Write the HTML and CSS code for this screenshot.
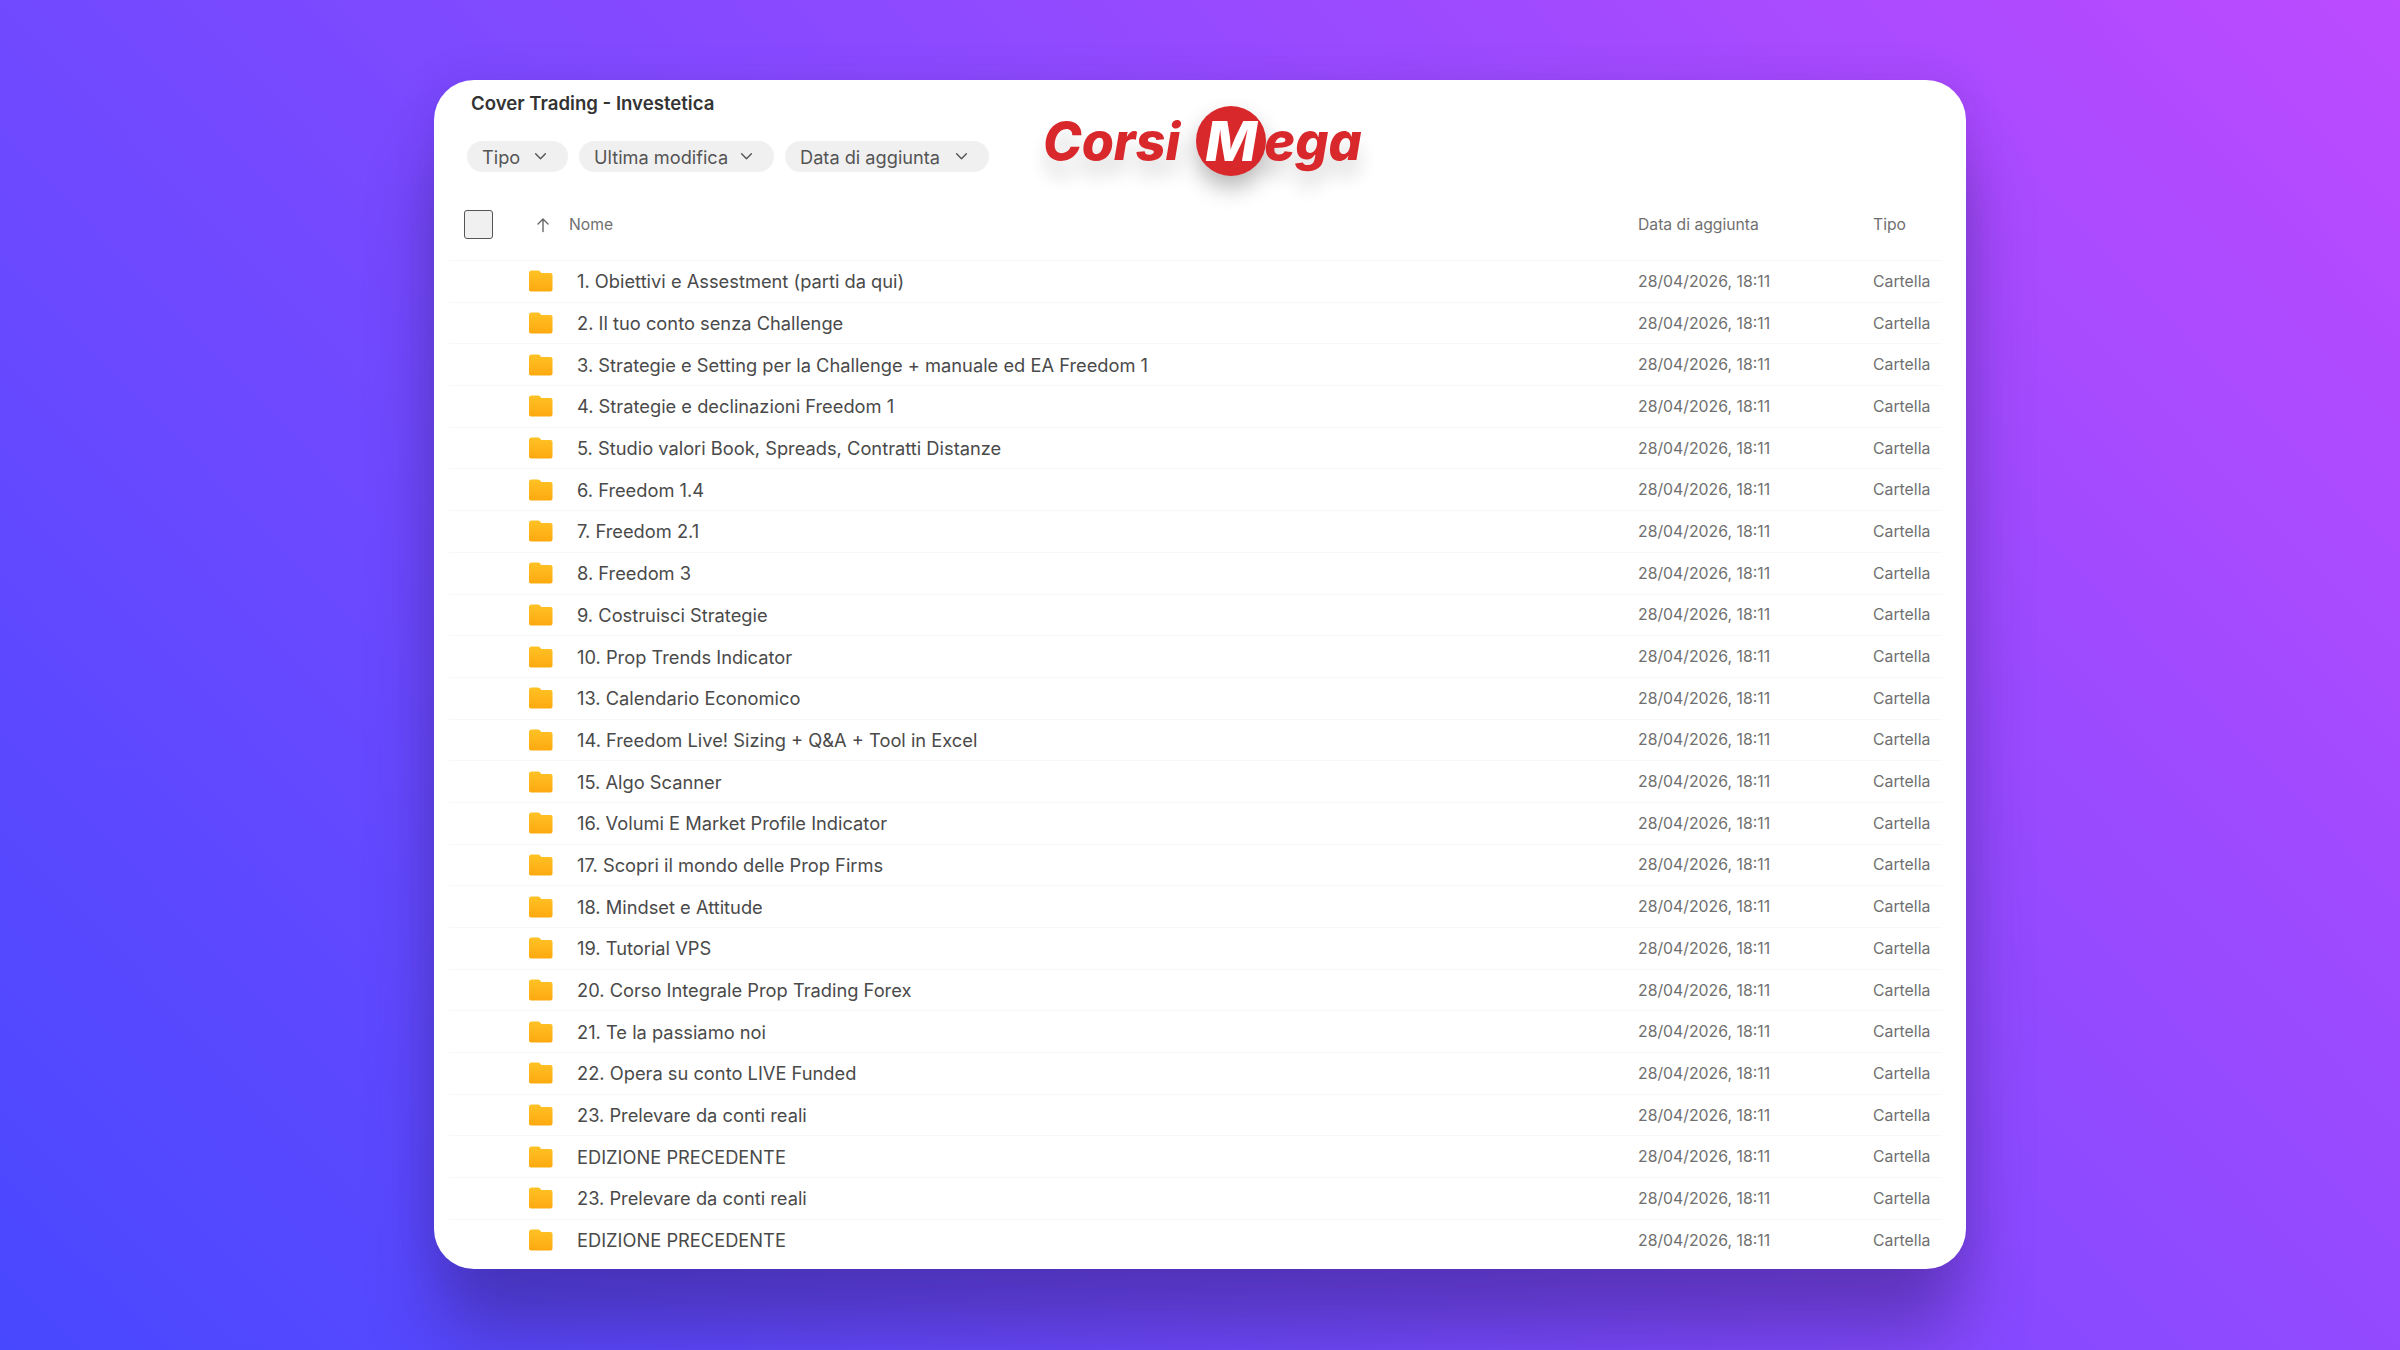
FILE: index.html
```html
<!DOCTYPE html>
<html lang="it">
<head>
<meta charset="UTF-8" />
<title>Cover Trading - Investetica</title>
<link rel="stylesheet" href="styles.css">
</head>
<body>
<svg class="defs" width="0" height="0" aria-hidden="true">
  <defs>
    <linearGradient id="folderFill" x1="0" y1="0" x2="0" y2="1">
      <stop offset="0" stop-color="#ffc226"/>
      <stop offset="1" stop-color="#fda90f"/>
    </linearGradient>
    <symbol id="folder" viewBox="0 0 24 22">
      <path fill="url(#folderFill)" d="M2.5 0.5h6.600c.7 0 1.300.3 1.800.8l1.400 1.700h9.200c1.200 0 2 .9 2 2v14.500c0 1.200-.9 2-2 2H2c-1.100 0-2-.9-2-2V3c0-1.400 1.100-2.500 2.500-2.500z"/>
    </symbol>
    <symbol id="chev" viewBox="0 0 12 8">
      <path d="M1.500 1.500L6 6l4.500-4.500" fill="none" stroke="#555" stroke-width="1.300" stroke-linecap="round" stroke-linejoin="round"/>
    </symbol>
  </defs>
</svg>

<main class="card">
  <h1 class="title">Cover Trading - Investetica</h1>

  <div class="filters">
    <div class="chip">Tipo <svg class="chev"><use href="#chev"/></svg></div>
    <div class="chip">Ultima modifica <svg class="chev"><use href="#chev"/></svg></div>
    <div class="chip">Data di aggiunta <svg class="chev"><use href="#chev"/></svg></div>
  </div>

  <div class="logo">
    <span>Corsi</span>
    <span class="logo-m">M</span>
    <span>ega</span>
  </div>

  <div class="head">
    <span class="checkbox"></span>
    <svg class="arrow" viewBox="0 0 14 16"><path d="M7 14.500V2M2 7l5-5 5 5" fill="none" stroke="#666" stroke-width="1.400" stroke-linecap="round" stroke-linejoin="round"/></svg>
    <span class="head-name">Nome</span>
    <span class="col-date">Data di aggiunta</span>
    <span class="col-type">Tipo</span>
  </div>

  <div class="rows" id="rows"></div>
</main>

<script>
  // Folder names, in the order they are listed
  const names = [
    '1. Obiettivi e Assestment (parti da qui)',
    '2. Il tuo conto senza Challenge',
    '3. Strategie e Setting per la Challenge + manuale ed EA Freedom 1',
    '4. Strategie e declinazioni Freedom 1',
    '5. Studio valori Book, Spreads, Contratti Distanze',
    '6. Freedom 1.4',
    '7. Freedom 2.1',
    '8. Freedom 3',
    '9. Costruisci Strategie',
    '10. Prop Trends Indicator',
    '13. Calendario Economico',
    '14. Freedom Live! Sizing + Q&A + Tool in Excel',
    '15. Algo Scanner',
    '16. Volumi E Market Profile Indicator',
    '17. Scopri il mondo delle Prop Firms',
    '18. Mindset e Attitude',
    '19. Tutorial VPS',
    '20. Corso Integrale Prop Trading Forex',
    '21. Te la passiamo noi',
    '22. Opera su conto LIVE Funded',
    '23. Prelevare da conti reali',
    'EDIZIONE PRECEDENTE',
    '23. Prelevare da conti reali',
    'EDIZIONE PRECEDENTE',
  ];
  const rows = document.getElementById('rows');
  names.forEach(name => {
    const row = document.createElement('div');
    row.className = 'row';
    row.innerHTML = '<svg class="folder"><use href="#folder"/></svg>' +
      '<span class="name"></span>' +
      '<span class="col-date">28/04/2026, 18:11</span>' +
      '<span class="col-type">Cartella</span>';
    row.querySelector('.name').textContent = name;
    rows.appendChild(row);
  });
</script>
</body>
</html>
```

FILE: styles.css
```css
* {
  box-sizing: border-box;
}
html, body {
  height: 100%;
}
body {
  margin: 0;
  padding-top: 80px;
  overflow: hidden;
  font-family: Inter, "Liberation Sans", sans-serif;
  background: linear-gradient(46deg, #4848ff 0%, #bc4bff 100%);
}
.defs {
  position: absolute;
}

.card {
  position: relative;
  width: 1532px;
  height: 1189px;
  margin: 0 auto;
  padding: 0 24px 0 30px;
  background: #fff;
  border-radius: 40px;
  overflow: hidden;
  box-shadow:
    0 70px 70px -6px rgba(50, 30, 110, 0.44),
    0 0 40px rgba(50, 30, 110, 0.14);
}

.title {
  margin: 0;
  padding: 11px 0 0 7px;
  font-size: 18.600px;
  line-height: 25px;
  font-weight: 600;
  color: #333;
}

.filters {
  display: flex;
  gap: 11px;
  margin: 25px 0 0 3px;
}
.chip {
  display: flex;
  align-items: center;
  justify-content: space-between;
  height: 31px;
  padding: 0 21px 0 15px;
  border-radius: 16px;
  background: #f0f0f0;
  font-size: 18.200px;
  color: #555;
}
.chip:nth-child(1) { width: 101px; }
.chip:nth-child(2) { width: 195px; }
.chip:nth-child(3) { width: 204px; }
.chev {
  width: 13px;
  height: 9px;
}

.logo {
  position: absolute;
  left: 609px;
  top: 26px;
  display: flex;
  align-items: center;
  font-size: 52px;
  font-weight: 800;
  font-style: italic;
  color: #d9282c;
  text-shadow: 0 16px 18px rgba(0, 0, 0, 0.14);
}
.logo-m {
  display: flex;
  align-items: center;
  justify-content: center;
  width: 70px;
  height: 70px;
  margin: 0 -2px 0 16px;
  border-radius: 50%;
  background: #d9282c;
  color: #fff;
  font-size: 55px;
  text-shadow: none;
  box-shadow: 0 12px 22px rgba(0, 0, 0, 0.28);
}

.head {
  display: flex;
  align-items: center;
  height: 37px;
  margin-top: 34px;
  font-size: 15.700px;
  color: #6f6f6f;
}
.checkbox {
  flex: none;
  width: 29px;
  height: 29px;
  border: 1.500px solid #555;
  border-radius: 3px;
  background: #f0f0f0;
}
.arrow {
  flex: none;
  width: 14px;
  height: 16px;
  margin-left: 43px;
}
.head-name {
  flex: 1;
  margin-left: 19px;
}
.col-date {
  flex: none;
  width: 235px;
}
.col-type {
  flex: none;
  width: 69px;
}

.rows {
  margin: 17px 0 0 -15px;
}
.row {
  display: flex;
  align-items: center;
  height: 41.700px;
  padding-left: 80px;
  border-top: 1px solid #f8f8f8;
}
.folder {
  flex: none;
  width: 24px;
  height: 22px;
}
.name {
  flex: 1;
  margin-left: 24px;
  font-size: 18.300px;
  color: #4a4a4a;
}
.row .col-date,
.row .col-type {
  font-size: 15.800px;
  color: #6f6f6f;
}
```
